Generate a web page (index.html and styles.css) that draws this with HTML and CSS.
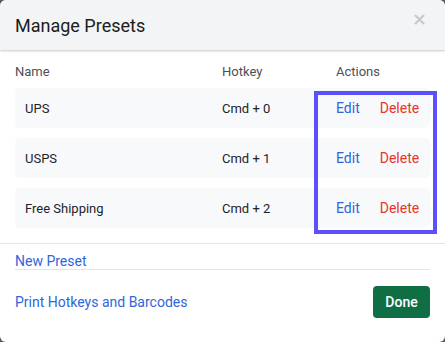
FILE: index.html
```html
<!DOCTYPE html>
<html lang="en">
<head>
<meta charset="utf-8">
<title>Manage Presets</title>
<link rel="stylesheet" href="styles.css">
</head>
<body>
<div class="dialog">
  <header class="dialog-header">
    <h1 class="title">Manage Presets</h1>
    <button class="close" aria-label="Close">
      <svg width="11" height="11" viewBox="0 0 11 11"><path d="M1 1L10 10M10 1L1 10" stroke="currentColor" stroke-width="2.4" stroke-linecap="butt"/></svg>
    </button>
  </header>
  <section class="dialog-body">
    <div class="col-head">
      <span>Name</span>
      <span>Hotkey</span>
      <span>Actions</span>
    </div>
    <div class="rows">
      <div class="row">
        <span class="name">UPS</span>
        <span class="hotkey">Cmd + 0</span>
        <span class="actions"><a class="edit">Edit</a><a class="delete">Delete</a></span>
      </div>
      <div class="row">
        <span class="name">USPS</span>
        <span class="hotkey">Cmd + 1</span>
        <span class="actions"><a class="edit">Edit</a><a class="delete">Delete</a></span>
      </div>
      <div class="row">
        <span class="name">Free Shipping</span>
        <span class="hotkey">Cmd + 2</span>
        <span class="actions"><a class="edit">Edit</a><a class="delete">Delete</a></span>
      </div>
    </div>
    <div class="highlight"></div>
  </section>
  <div class="new-preset"><a class="link">New Preset</a></div>
  <footer class="dialog-footer">
    <a class="link">Print Hotkeys and Barcodes</a>
    <button class="done">Done</button>
  </footer>
</div>
</body>
</html>
```
FILE: styles.css
```css
* { box-sizing: border-box; }
html, body { margin: 0; padding: 0; }
body {
  background: #5a5a5a;
  font-family: Roboto, "Liberation Sans", Arial, sans-serif;
  color: #1f2328;
}
.dialog {
  width: 445px;
  height: 342px;
  background: #ffffff;
  border-radius: 6px;
  overflow: hidden;
  display: flex;
  flex-direction: column;
}
.dialog-header {
  height: 50px;
  flex: none;
  background: #f3f4f6;
  box-shadow: 0 1px 2px rgba(0,0,0,0.22);
  display: flex;
  align-items: center;
  justify-content: space-between;
  padding: 0 15px;
  position: relative;
  z-index: 1;
}
.title {
  margin: 0;
  font-size: 18px;
  font-weight: 400;
  color: #1a1d21;
  line-height: 22px;
  padding-top: 1px;
}
.close {
  border: 0;
  background: none;
  padding: 0;
  color: #c6cacf;
  width: 11px;
  height: 11px;
  display: flex;
  margin-right: 5px;
  margin-bottom: 11px;
}
.dialog-body {
  position: relative;
  padding: 14px 15px 15px;
  border-bottom: 1px solid #e3e5e8;
}
.col-head {
  display: grid;
  grid-template-columns: 207px 114px 1fr;
  font-size: 13px;
  line-height: 16px;
  color: #4b5058;
  padding-bottom: 8px;
}
.rows {
  display: flex;
  flex-direction: column;
  gap: 10px;
}
.row {
  height: 40px;
  background: #f8f9fb;
  border-radius: 5px;
  display: grid;
  grid-template-columns: 197px 114px 1fr;
  align-items: center;
  padding-left: 10px;
  font-size: 13px;
  color: #1f2328;
}
.actions {
  display: flex;
  gap: 20px;
  font-size: 14px;
}
.edit { color: #2f66dc; }
.delete { color: #e8352a; }
.highlight {
  position: absolute;
  left: 314px;
  top: 41px;
  width: 123px;
  height: 143px;
  border: 4px solid #5c50fb;
  pointer-events: none;
}
.new-preset {
  margin: 0 15px;
  padding-top: 9px;
  border-bottom: 1px solid #e3e5e8;
  font-size: 14px;
  line-height: 16px;
}
.link { color: #2f66dc; font-size: 14px; }
.dialog-footer {
  display: flex;
  justify-content: space-between;
  align-items: center;
  padding: 16px 15px 0 15px;
}
.done {
  height: 32px;
  width: 57px;
  border: 0;
  border-radius: 4px;
  background: #0f6e44;
  color: #ffffff;
  font-family: Roboto, "Liberation Sans", Arial, sans-serif;
  font-size: 14px;
  font-weight: 500;
  padding: 0;
}
```
